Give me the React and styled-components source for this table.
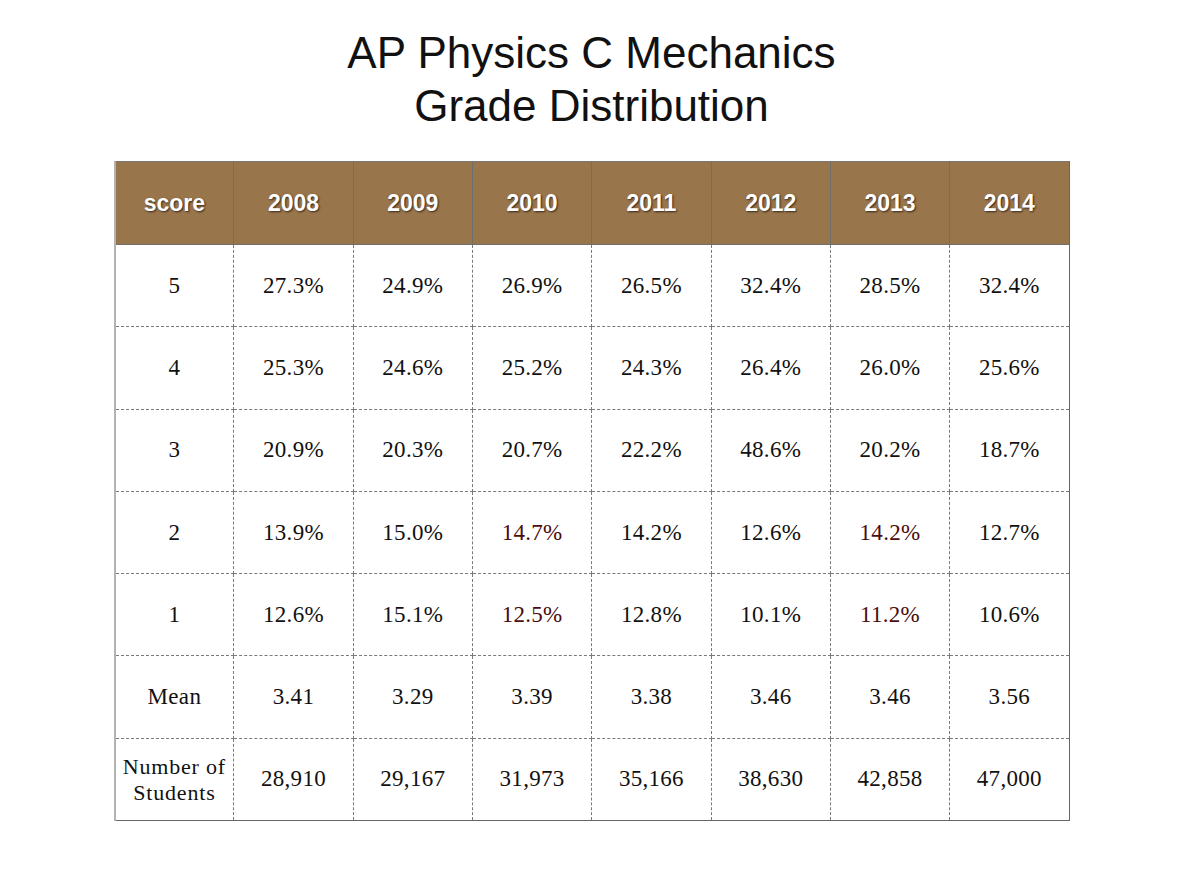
import React from 'react';
import styled, { createGlobalStyle } from 'styled-components';

const years = ['2008', '2009', '2010', '2011', '2012', '2013', '2014'];

const rows = [
  { label: '5', values: ['27.3%', '24.9%', '26.9%', '26.5%', '32.4%', '28.5%', '32.4%'] },
  { label: '4', values: ['25.3%', '24.6%', '25.2%', '24.3%', '26.4%', '26.0%', '25.6%'] },
  { label: '3', values: ['20.9%', '20.3%', '20.7%', '22.2%', '48.6%', '20.2%', '18.7%'] },
  { label: '2', values: ['13.9%', '15.0%', '14.7%', '14.2%', '12.6%', '14.2%', '12.7%'], red: [2, 5] },
  { label: '1', values: ['12.6%', '15.1%', '12.5%', '12.8%', '10.1%', '11.2%', '10.6%'], red: [2, 5] },
  { label: 'Mean', values: ['3.41', '3.29', '3.39', '3.38', '3.46', '3.46', '3.56'] },
  { label: 'students', values: ['28,910', '29,167', '31,973', '35,166', '38,630', '42,858', '47,000'] },
];

export default function App() {
  return (
    <>
      <GlobalStyle />
      <Page>
        <Title>
          AP Physics C Mechanics
          <br />
          Grade Distribution
        </Title>
        <Table>
          <thead>
            <tr>
              <HeadCell>score</HeadCell>
              {years.map((y) => (
                <HeadCell key={y}>{y}</HeadCell>
              ))}
            </tr>
          </thead>
          <tbody>
            {rows.map((row) => (
              <tr key={row.label}>
                <Cell>
                  {row.label === 'students' ? (
                    <Small>
                      Number of
                      <br />
                      Students
                    </Small>
                  ) : (
                    row.label
                  )}
                </Cell>
                {row.values.map((v, i) => (
                  <Cell key={i} $red={row.red && row.red.includes(i)}>
                    {v}
                  </Cell>
                ))}
              </tr>
            ))}
          </tbody>
        </Table>
      </Page>
    </>
  );
}

const GlobalStyle = createGlobalStyle`
  body {
    margin: 0;
    background: #ffffff;
  }
`;

const Page = styled.div`
  display: flex;
  flex-direction: column;
  align-items: center;
  padding-top: 26px;
`;

const Title = styled.h1`
  margin: 0 0 29px;
  font-family: 'Liberation Sans', Arial, sans-serif;
  font-weight: 400;
  font-size: 44px;
  line-height: 53px;
  color: #111;
  text-align: center;
`;

const Table = styled.table`
  width: 956px;
  border-collapse: collapse;
  table-layout: fixed;
  border-top: 1px solid #777;
  border-right: 1px solid #666;
  border-bottom: 1px solid #666;
  border-left: 2px solid #b3b3b3;
`;

const HeadCell = styled.th`
  height: 82px;
  padding: 0;
  background: #99754b;
  border-left: 1px solid #6f6f6f;
  border-bottom: 1px solid #6f6f6f;
  color: #fff;
  font-family: 'Liberation Sans', Arial, sans-serif;
  font-weight: 700;
  font-size: 23px;
  text-shadow: 1px 1px 2px rgba(0, 0, 0, 0.65);
  text-align: center;
  vertical-align: middle;
`;

const Cell = styled.td`
  height: 81.3px;
  padding: 0;
  border: 1px dashed #7a7a7a;
  color: ${(p) => (p.$red ? '#4b0d0d' : '#111')};
  font-family: 'Liberation Serif', 'Times New Roman', serif;
  font-size: 23px;
  letter-spacing: 0.3px;
  text-align: center;
  vertical-align: middle;
`;

const Small = styled.span`
  display: inline-block;
  line-height: 26px;
  font-size: 22px;
  letter-spacing: 0.8px;
  padding-top: 2px;
`;
